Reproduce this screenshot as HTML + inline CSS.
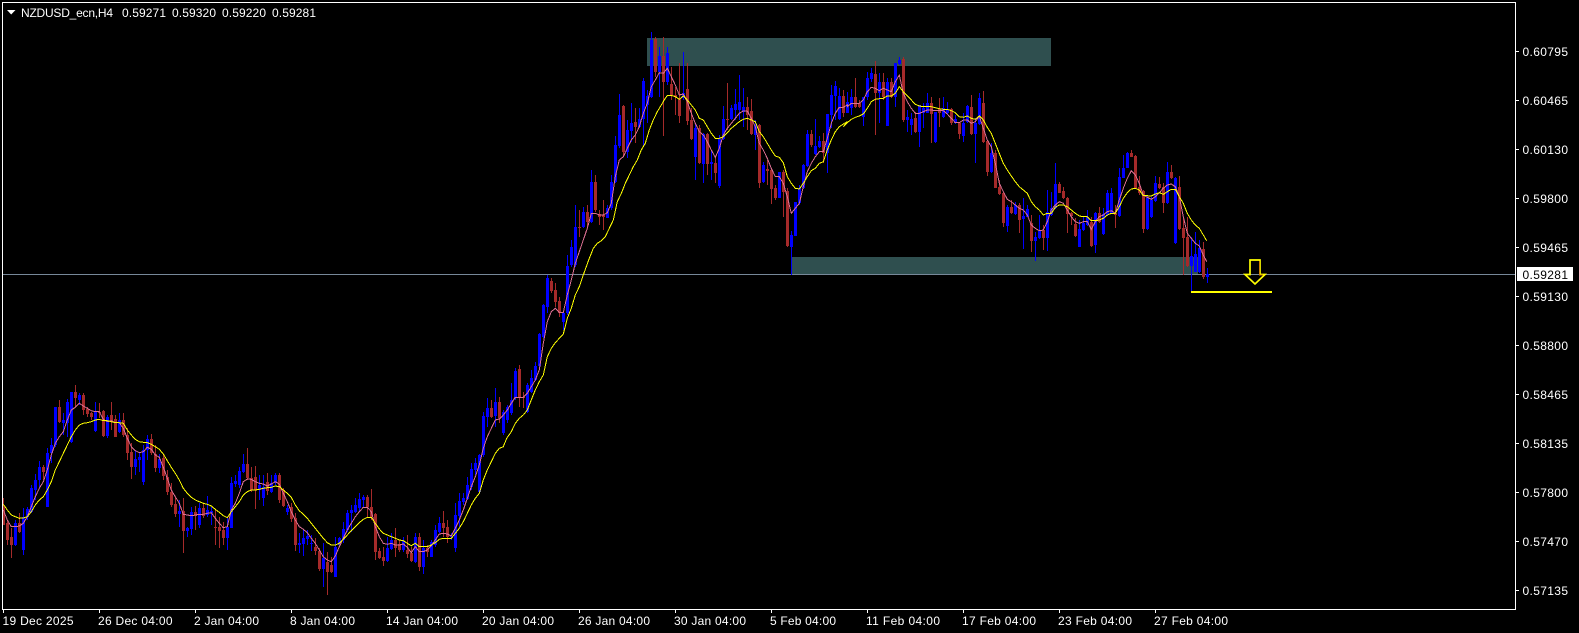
<!DOCTYPE html>
<html><head><meta charset="utf-8"><title>NZDUSD_ecn,H4</title>
<style>
html,body{margin:0;padding:0;background:#000;width:1579px;height:633px;overflow:hidden}
svg{position:absolute;left:0;top:0;display:block}
text{font-family:"Liberation Sans",sans-serif;font-size:12px;fill:#fff}
</style></head><body>
<svg id="c" width="1579" height="633" viewBox="0 0 1579 633" xmlns="http://www.w3.org/2000/svg">
<rect x="647" y="38" width="404" height="28" fill="#2f4f4f"/>
<rect x="792" y="257" width="406" height="17" fill="#2f4f4f"/>
<rect x="3" y="274" width="1512" height="1" fill="#778899"/>
<g id="cand" shape-rendering="crispEdges"></g>
<polyline id="ma1" fill="none" stroke="#db7093" stroke-width="1" shape-rendering="crispEdges"/>
<polyline id="ma2" fill="none" stroke="#ffff00" stroke-width="1" shape-rendering="crispEdges"/>
<rect x="1191" y="291" width="81" height="2" fill="#ffff00"/>
<polygon points="1250,260 1260,260 1260,274.5 1265,274.5 1255,284 1245,274.5 1250,274.5" fill="none" stroke="#ffff00" stroke-width="1.7"/>
<polyline points="1259.5,261 1259.5,275 1263,275" fill="none" stroke="#d08000" stroke-width="1"/>
<g shape-rendering="crispEdges" fill="#fff">
<rect x="2" y="2" width="1514" height="1"/><rect x="2" y="2" width="1" height="608"/>
<rect x="2" y="609" width="1514" height="1"/><rect x="1515" y="2" width="1" height="608"/>
<rect x="3" y="610" width="1" height="3"/><rect x="99" y="610" width="1" height="3"/><rect x="195" y="610" width="1" height="3"/><rect x="291" y="610" width="1" height="3"/><rect x="387" y="610" width="1" height="3"/><rect x="483" y="610" width="1" height="3"/><rect x="579" y="610" width="1" height="3"/><rect x="675" y="610" width="1" height="3"/><rect x="771" y="610" width="1" height="3"/><rect x="867" y="610" width="1" height="3"/><rect x="963" y="610" width="1" height="3"/><rect x="1059" y="610" width="1" height="3"/><rect x="1155" y="610" width="1" height="3"/>
<rect x="1516" y="51" width="3" height="1"/><rect x="1516" y="100" width="3" height="1"/><rect x="1516" y="149" width="3" height="1"/><rect x="1516" y="198" width="3" height="1"/><rect x="1516" y="247" width="3" height="1"/><rect x="1516" y="296" width="3" height="1"/><rect x="1516" y="345" width="3" height="1"/><rect x="1516" y="394" width="3" height="1"/><rect x="1516" y="443" width="3" height="1"/><rect x="1516" y="492" width="3" height="1"/><rect x="1516" y="541" width="3" height="1"/><rect x="1516" y="590" width="3" height="1"/>
</g>
<polygon points="7,10 15.5,10 11.2,14.5" fill="#fff"/>
<text x="21" y="17" textLength="92">NZDUSD_ecn,H4</text>
<text x="122" y="17" textLength="44">0.59271</text>
<text x="172" y="17" textLength="44">0.59320</text>
<text x="222" y="17" textLength="44">0.59220</text>
<text x="272" y="17" textLength="44">0.59281</text>
<g>
<text x="1522.5" y="56" textLength="45.5">0.60795</text>
<text x="1522.5" y="105" textLength="45.5">0.60465</text>
<text x="1522.5" y="154" textLength="45.5">0.60130</text>
<text x="1522.5" y="203" textLength="45.5">0.59800</text>
<text x="1522.5" y="252" textLength="45.5">0.59465</text>
<text x="1522.5" y="301" textLength="45.5">0.59130</text>
<text x="1522.5" y="350" textLength="45.5">0.58800</text>
<text x="1522.5" y="399" textLength="45.5">0.58465</text>
<text x="1522.5" y="448" textLength="45.5">0.58135</text>
<text x="1522.5" y="497" textLength="45.5">0.57800</text>
<text x="1522.5" y="546" textLength="45.5">0.57470</text>
<text x="1522.5" y="595" textLength="45.5">0.57135</text>
</g>
<rect x="1517" y="267" width="56" height="14" fill="#fff" shape-rendering="crispEdges"/>
<text x="1522.5" y="279" textLength="45.5" style="fill:#000">0.59281</text>
<g>
<text x="2.5" y="625" textLength="71">19 Dec 2025</text>
<text x="98" y="625" textLength="74.5">26 Dec 04:00</text>
<text x="194" y="625" textLength="65">2 Jan 04:00</text>
<text x="290" y="625" textLength="65">8 Jan 04:00</text>
<text x="386" y="625" textLength="72">14 Jan 04:00</text>
<text x="482" y="625" textLength="72">20 Jan 04:00</text>
<text x="578" y="625" textLength="72">26 Jan 04:00</text>
<text x="674" y="625" textLength="72">30 Jan 04:00</text>
<text x="770" y="625" textLength="66">5 Feb 04:00</text>
<text x="866" y="625" textLength="74">11 Feb 04:00</text>
<text x="962" y="625" textLength="74">17 Feb 04:00</text>
<text x="1058" y="625" textLength="74">23 Feb 04:00</text>
<text x="1154" y="625" textLength="74">27 Feb 04:00</text>
</g>
</svg>
<script>
var segs=[
{s:0,y0:380,k:3,d:"r355,380,435,436 r420,430,480,495 r445,472,495,533 b420,430,495,497 r400,430,457,460 b385,410,510,525 b380,388,410,420 b315,323,395,400 b283,300,330,360 b243,262,300,325 r255,260,276,300 b205,220,380,382 b175,195,220,250 b80,82,195,200 r60,82,127,130 b100,120,130,165 b58,65,130,170 b36,36,185,190 r15,36,53,80 b40,45,60,75 r40,45,90,105 r80,88,102,110 r95,98,110,120 b65,95,153,155 r70,95,98,115 r90,93,167,170 b105,110,168,175 r65,105,125,150 r105,118,170,172 b100,120,155,158 r100,120,165,170 r145,165,218,240 r190,215,262,297 b210,237,262,285 b215,232,240,275 b195,210,305,315 b165,178,210,240 r162,178,220,225 r195,222,263,275 b222,237,263,280 r225,235,288,300 r270,290,335,345 r310,337,375,380 r350,372,402,410 b360,392,402,440 r355,392,452,518 b440,445,452,470 b380,395,447,465 r378,395,408,450 b370,385,435,445 r370,385,408,415 b348,390,405,410 b380,392,400,435 r390,442,445,495 r410,440,452,505 r425,450,473,495 b415,440,473,510 b290,310,443,445 b285,303,312,320 b260,272,316,325 b222,252,276,280 r205,252,293,300 r262,293,330,335 r258,292,330,388 b285,315,330,360 b285,320,353,378 r280,305,332,345 b285,310,335,340 b280,285,310,315 r280,285,360,370 r325,330,378,380 b375,385,397,405 r370,380,418,425 r400,415,495,513 b460,490,495,520 b450,475,493,527 b450,468,478,495 b465,490,493,512 r475,500,513,525 r505,513,568,573 b490,533,568,620 r515,545,575,645 r530,555,576,580 b470,500,590,592 b470,475,495,500 b425,448,480,490 b390,400,450,455 b375,390,400,455 b355,375,395,400 b340,358,385,395 b345,352,360,385 r345,350,382,410 r328,380,412,420 r400,403,515,540 r505,513,533,537 r500,532,543,558 b470,503,543,545 b460,480,507,510 r445,480,505,530 r480,493,510,515 b470,482,510,515 r465,510,522,535 r500,518,543,545 b460,470,545,548 r460,470,560,572 b480,505,562,582 r495,505,515,530 b480,485,530,532 b435,450,495,500 b410,430,455,460 r393,428,445,470 r420,442,472,490 b460,468,472,480 b370,405,505,515 b340,363,407,440 b340,353,365,375 b290,315,357,360 b250,268,320,330 b235,250,270,285 b222,225,335,337 b95,108,225,230 b55,83,112,140 r60,85,110,115 b25,65,108,140 r50,65,115,130"},
{s:125,y0:0,k:1,d:"b410,412,433,435 b405,407,420,423 b383,400,413,415 b368,371,398,400 r365,369,398,407 r392,397,398,408 b383,385,412,413 b370,378,392,393 b362,366,380,381 b333,334,366,367 b304,305,337,338"},
{s:136,y0:20,k:3,d:"b765,775,860,880 r775,783,812,820 r790,810,845,860 r830,843,880,890 b875,878,905,930 b705,738,880,885 b660,682,735,740 b555,622,735,740 r570,622,625,650 b560,575,622,625 r555,575,605,625 b450,487,605,610 r465,487,570,575 r570,583,590,615 r540,585,592,630 b555,565,593,595 b465,487,565,570 b348,375,487,490 b222,285,377,385 r255,258,395,410 b300,330,395,415 b250,310,332,365 r265,306,322,370 b265,298,322,325 b175,183,298,380 b210,228,255,310 b37,60,230,235 r50,58,155,170 b80,108,155,232 r52,108,185,347 b82,100,185,195 r140,192,225,240 r200,225,232,285 r130,235,287,310 b97,220,235,240 r130,207,303,315 r265,300,357,360 b310,323,410,480 r315,323,430,432 b340,343,432,490 r340,343,432,465 b390,425,432,480 r410,430,458,490 b345,358,497,503 b258,298,358,360 r190,296,298,330 b255,265,298,300 b207,252,270,300 b165,245,270,300 b205,262,275,320 r230,260,285,330 r238,273,342,345 b300,315,345,390 r312,315,488,505 b425,435,487,490 r420,448,454,495 r445,450,507,552 r495,503,534,540 b455,457,534,535 r450,457,515,590 r505,513,677,680 b632,645,680,765 b545,545,647,648 b495,505,550,555 b432,435,505,508 b330,342,437,440 r330,342,375,380 b297,378,402,405 b348,362,382,385 r340,362,400,428 b282,282,398,460 b195,225,285,325 b183,198,228,300 b205,228,298,300 r210,228,280,290"},
{s:211,y0:40,k:3,d:"b155,185,218,220 b148,170,205,225 r113,170,200,205 r180,190,202,205 b170,172,232,258 b95,113,172,180 b85,100,118,125 r62,102,158,285 b100,125,158,250 r100,125,172,180 b115,125,257,258 r115,125,172,175 b68,68,172,200 b50,60,72,75 r52,58,240,245 b210,232,240,275 b220,238,255,285 r215,235,275,280 b195,195,275,322 b190,205,220,265 b160,190,218,220 r170,190,222,310 b215,215,305,308 r175,208,218,260 b172,205,232,235 b185,210,220,225 r205,207,250,255 b225,237,250,252 r245,250,282,297 b220,248,287,305 b195,197,245,248 r165,200,282,285 b235,250,282,370 b160,173,252,255 r153,188,305,310 r300,303,395,408 b310,338,396,398 r330,338,443,445 r420,440,462,465 r455,458,550,560 b495,500,557,575 r480,500,520,522 b485,495,522,525 r490,495,540,580 b475,528,538,628 b495,507,530,532 r525,550,603,635 b575,590,603,662 b525,573,595,598 r555,570,595,630 b450,515,595,632 b455,503,525,528 b368,432,505,508 r425,432,458,460 r440,452,475,478 r470,473,522,578 r515,518,527,555 r535,552,587,590 b540,568,620,622 b530,550,570,572 b510,530,555,558 r530,545,618,622 b515,520,615,640 r500,518,545,548 b505,522,582,585 b450,460,525,528 b445,460,520,522 r495,518,525,565 b385,412,527,530 b345,383,413,415 b335,338,383,385 r330,338,350,352 r345,348,445,448 r408,442,458,465 r450,452,567,578 b465,475,567,570 b470,480,532,535 b408,430,482,485 r410,432,445,448 r430,440,490,518 b365,395,490,492 r375,395,415,418 b410,415,608,612 r408,440,567,570 r530,563,595,705 r530,590,678,680 b590,648,678,755 b575,642,695,697 b600,625,697,700 r605,627,710,718 b685,702,710,730"}
];
var h={b:[[],[]],r:[[],[]]},cs={b:"#0000ff",r:"#a52a2a"};
segs.forEach(function(g){g.d.split(" ").forEach(function(t,n){
 var c=t[0],v=t.slice(1).split(",").map(function(a){return Math.round(g.y0+(+a)/g.k)});
 var i=g.s+n,x=3+4*i;
 h[c][0].push('<rect x="'+x+'" y="'+v[0]+'" width="1" height="'+Math.max(1,v[3]-v[0])+'"/>');
 h[c][1].push('<rect x="'+(x-1)+'" y="'+v[1]+'" width="3" height="'+Math.max(1,v[2]-v[1])+'"/>');
})});
document.getElementById("cand").innerHTML=
 '<g fill="'+cs.b+'">'+h.b[0].join("")+'</g><g fill="'+cs.r+'">'+h.r[0].join("")+'</g>'+
 '<g fill="'+cs.r+'">'+h.r[1].join("")+'</g><g fill="'+cs.b+'">'+h.b[1].join("")+'</g>';
function pts(a,x0,y0){var o=[];for(var i=0;i<a.length;i+=2)o.push((x0+a[i]/3).toFixed(1)+","+(y0+a[i+1]/3).toFixed(1));return o.join(" ")}
var p1=pts([10,390,22,420,34,440,46,440,58,438,70,430,82,410,94,380,106,350,118,325,130,305,142,270,154,225,166,190,178,170,190,155,202,120,214,90,226,82,238,70,250,78,262,85,274,92,286,95,298,95,310,118,322,125,334,122,346,128,358,128,370,145,382,175,394,200,406,212,418,218,430,215,442,202,454,208,466,225,478,232,490,262,502,295,514,330,526,350,538,370,550,403,562,405,574,407,586,405,598,403,610,403,622,400,634,398,646,415,658,430,670,443,682,440,694,390,706,370,718,340,730,305,742,297,754,298,766,305,778,310,790,312,802,318,814,312,826,305,838,312,850,340,862,365,874,395,886,420,898,440,910,448,922,458,934,475,946,490,958,510,970,530,982,540,994,545,1006,528,1018,500,1030,475,1042,450,1054,430,1066,410,1078,395,1090,382,1102,382,1114,395,1126,440,1138,470,1150,490,1162,493,1174,490,1186,495,1198,495,1210,492,1222,502,1234,518,1246,500,1258,515,1270,515,1282,510,1294,497,1306,480,1318,462,1330,460,1342,462,1354,468,1366,445,1378,420,1390,390,1402,355,1414,320,1426,290,1438,255,1450,205,1462,170,1474,145,1486,120,1498,117],0,380)
+" "+pts([25,135,37,120,49,100,61,82,73,82,85,82,97,70,109,50,121,30,133,0],495,370)
+" "+pts([145,250,157,185,169,155,181,145,193,157,205,157,217,105,229,60,241,10],495,260)
+" "+pts([412,625,424,580,436,580,448,585,460,585,472,578,484,550,496,470,508,420,520,410,532,385,544,360,556,345,568,320,580,280,592,250,604,200,616,180,628,158,640,160,652,145,664,170,676,195,688,225,700,222,712,245,724,280,736,310,748,335,760,345,772,365,784,390,796,412,808,385,820,345,832,325,844,310,856,295,868,280,880,273,892,273,904,295,916,320,928,370,940,390,952,415,964,445,976,470,988,470,1000,490,1012,530,1024,580,1036,565,1048,550,1060,500,1072,455,1084,430,1096,410,1108,395,1120,395,1132,355,1144,310,1156,280,1168,262,1180,262,1192,255],450,20)
+" "+pts([22,200,34,190,46,190,58,190,70,180,82,155,94,142,106,145,118,152,130,145,142,150,154,155,166,125,178,105,190,160,202,185,214,205,226,220,238,220,250,215,262,210,274,210,286,212,298,212,310,212,322,222,334,235,346,248,358,248,370,240,382,240,394,250,406,245,418,228,430,265,442,300,454,320,466,370,478,430,490,455,502,478,514,485,526,495,538,505,550,510,562,525,574,555,586,565,598,572,610,570,622,545,634,510,646,495,658,485,670,490,682,510,694,530,706,545,718,550,730,545,742,545,754,568,766,545,778,530,790,525,802,515,814,512,826,520,838,480,850,445,862,415,874,392,886,405,898,430,910,465,922,472,934,478,946,470,958,458,970,445,982,435,994,432,1006,440,1018,470,1030,530,1042,580,1054,595,1066,610,1078,618,1090,645,1100,665],840,40);
var p2=pts([10,373,22,390,34,405,46,410,58,415,70,414,82,410,94,395,106,375,118,360,130,350,142,330,154,305,166,270,178,245,190,220,202,195,214,170,226,150,238,135,250,130,262,128,274,125,286,120,298,118,310,122,322,122,334,125,346,128,358,128,370,130,382,150,394,165,406,178,418,185,430,187,442,188,454,193,466,200,478,208,490,222,502,242,514,262,526,280,538,300,550,325,562,340,574,352,586,360,598,365,610,370,622,373,634,378,646,388,658,397,670,407,682,413,694,395,706,380,718,365,730,345,742,335,754,330,766,330,778,328,790,325,802,323,814,322,826,318,838,320,850,330,862,340,874,352,886,375,898,392,910,403,922,415,934,430,946,445,958,460,970,475,982,488,994,495,1006,495,1018,490,1030,478,1042,465,1054,452,1066,440,1078,428,1090,418,1102,412,1114,412,1126,430,1138,447,1150,460,1162,465,1174,470,1186,475,1198,480,1210,482,1222,490,1234,497,1246,490,1258,500,1270,500,1282,500,1294,495,1306,488,1318,478,1330,475,1342,475,1354,475,1366,460,1378,445,1390,425,1402,400,1414,375,1426,355,1438,340,1450,300,1462,270,1474,245,1486,220,1498,205],0,380)
+" "+pts([25,230,35,205,49,185,61,160,73,145,85,135,97,120,109,90,121,60,133,35,145,15],495,370)
+" "+pts([157,290,169,265,181,248,193,235,205,222,217,175,229,145,241,105,253,80,265,45],495,260)
+" "+pts([418,715,430,685,442,670,454,662,466,650,478,625,490,600,502,545,514,520,526,490,538,465,550,440,562,420,574,390,586,370,598,330,610,300,622,275,634,255,646,235,652,227,664,226,676,230,688,238,700,228,712,240,724,255,736,270,748,295,760,300,772,320,784,340,796,355,808,355,820,350,832,338,844,325,856,315,868,305,880,298,892,295,904,300,916,305,928,335,940,350,952,370,964,390,976,408,988,412,1000,428,1012,470,1024,490,1036,505,1048,507,1060,490,1072,470,1084,452,1096,445,1108,430,1120,425,1132,390,1144,360,1156,335,1168,320,1180,312,1192,305],450,20)
+" "+pts([10,260,22,248,34,238,46,232,58,228,70,222,82,205,94,185,106,178,118,176,130,175,142,168,154,168,166,160,178,140,190,155,202,168,214,180,226,193,238,198,250,200,262,200,274,200,286,203,298,206,310,208,322,208,334,212,346,218,358,230,370,232,382,228,394,235,406,238,418,228,430,240,442,262,454,280,466,310,478,340,490,370,502,390,514,408,526,425,538,440,550,450,562,460,574,485,586,500,598,510,610,525,622,520,634,520,646,502,658,495,670,495,682,500,694,510,706,520,718,528,730,530,742,530,754,542,766,542,778,540,790,535,802,525,814,520,826,520,838,500,850,475,862,458,874,447,886,445,898,450,910,467,922,467,934,468,946,462,958,458,970,463,982,455,994,448,1006,448,1018,470,1030,490,1042,520,1054,540,1066,555,1078,565,1090,585,1100,602],840,40);
document.getElementById("ma1").setAttribute("points",p1);
document.getElementById("ma2").setAttribute("points",p2);
</script>
</body></html>
